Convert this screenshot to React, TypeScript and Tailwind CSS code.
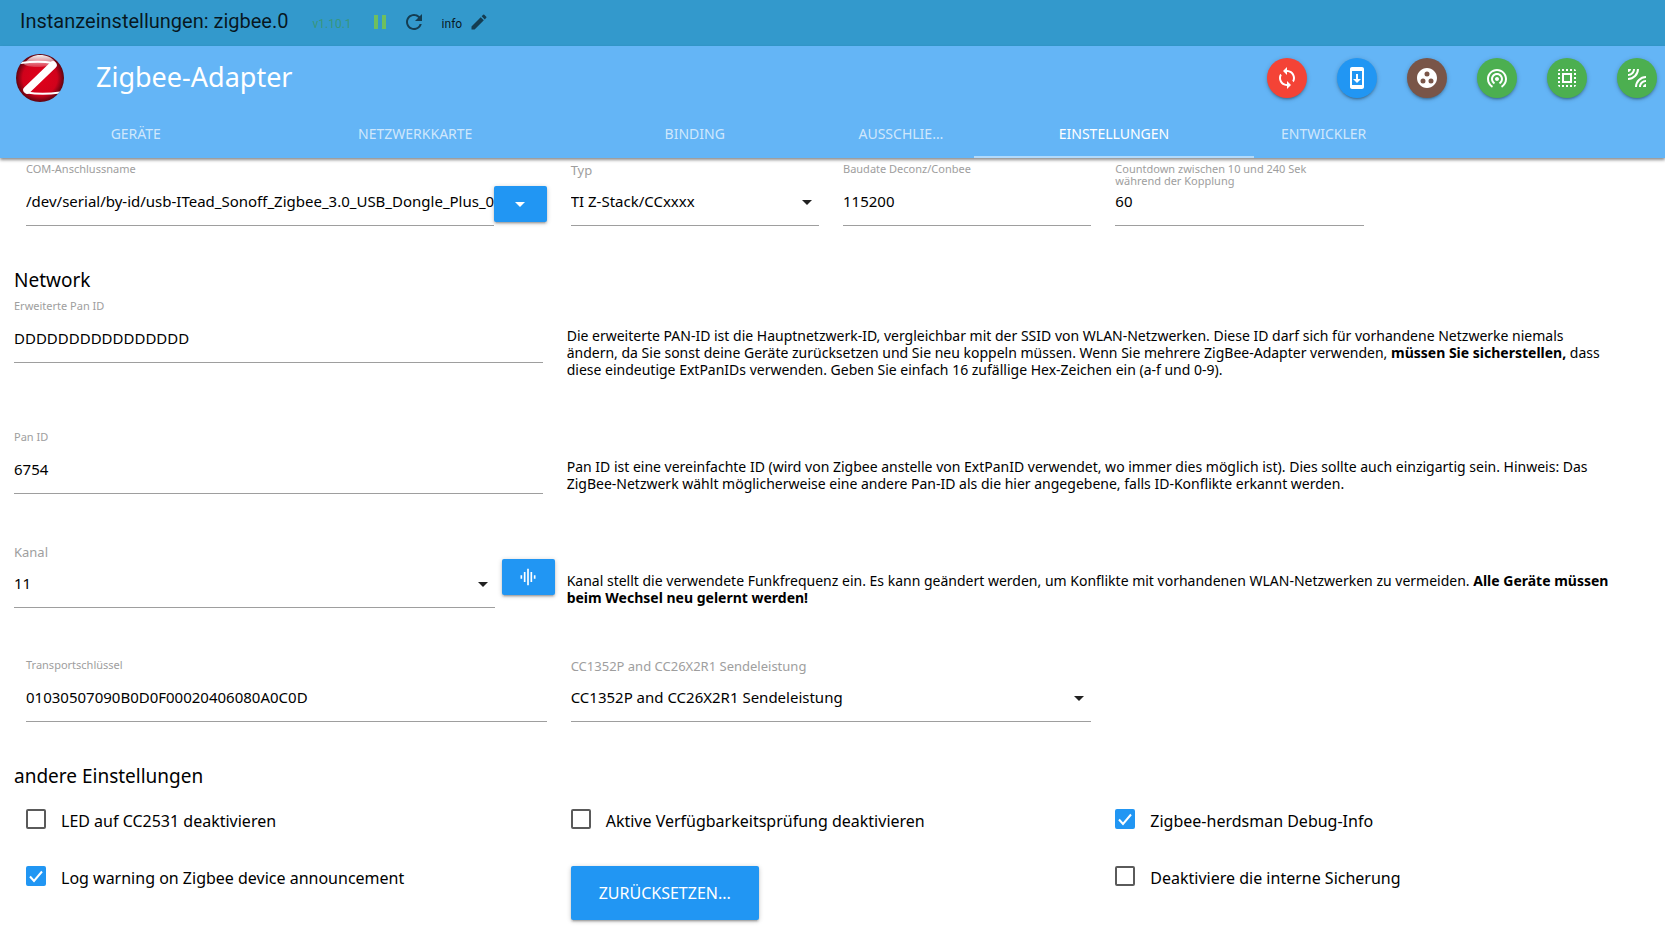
import { useId, type ReactNode } from "react";
import type { IconType } from "react-icons";
import {
  MdArrowDropDown,
  MdEdit,
  MdGraphicEq,
  MdGroupWork,
  MdLeakAdd,
  MdPause,
  MdRefresh,
  MdSelectAll,
  MdSync,
  MdSystemUpdate,
  MdWifiTethering,
} from "react-icons/md";

const shadow = "shadow-[0_2px_2px_0_rgba(0,0,0,0.14),0_3px_1px_-2px_rgba(0,0,0,0.12),0_1px_5px_0_rgba(0,0,0,0.2)]";

const actions: { label: string; icon: IconType; color: string }[] = [
  { label: "Aktualisieren", icon: MdSync, color: "bg-[#f44336]" },
  { label: "Firmware", icon: MdSystemUpdate, color: "bg-[#2196f3]" },
  { label: "Gruppen", icon: MdGroupWork, color: "bg-[#795548]" },
  { label: "Touchlink", icon: MdWifiTethering, color: "bg-[#4caf50]" },
  { label: "Auswahl", icon: MdSelectAll, color: "bg-[#4caf50]" },
  { label: "Anlernen", icon: MdLeakAdd, color: "bg-[#4caf50]" },
];

const tabs = [
  { label: "Geräte", span: "col-span-2" },
  { label: "Netzwerkkarte", span: "col-span-2" },
  { label: "Binding", span: "col-span-2" },
  { label: "Ausschließen", span: "col-span-1" },
  { label: "Einstellungen", span: "col-span-2", active: true },
  { label: "Entwickler", span: "col-span-1" },
];

function Logo() {
  return (
    <svg viewBox="0 0 48 48" className="size-12 shrink-0" aria-hidden="true">
      <defs>
        <radialGradient id="ball" cx="50%" cy="50%" r="50%">
          <stop offset="0" stopColor="#e2001a" />
          <stop offset="0.72" stopColor="#d0021b" />
          <stop offset="1" stopColor="#5e0410" />
        </radialGradient>
        <linearGradient id="gloss" x1="0" y1="0" x2="0" y2="1">
          <stop offset="0" stopColor="#fff" stopOpacity="0.95" />
          <stop offset="1" stopColor="#fff" stopOpacity="0.2" />
        </linearGradient>
        <clipPath id="disc">
          <circle cx="24" cy="24" r="24" />
        </clipPath>
      </defs>
      <circle cx="24" cy="24" r="24" fill="url(#ball)" />
      <path d="M8 10C13 3 18 1 24 1s12 2 16 8c-3 4-29 6-32 1z" fill="url(#gloss)" />
      <g clipPath="url(#disc)" fill="none" stroke="#fff" strokeLinecap="round" strokeLinejoin="round">
        <path d="M5 9C16 7.500 28 7.500 37 9" strokeWidth="2" />
        <path d="M37 11 11 36" strokeWidth="7.500" />
        <path d="M11 38.500C22 40.500 34 40 44 38.500" strokeWidth="2" />
      </g>
    </svg>
  );
}

const labelBase = "block h-6 text-[#9e9e9e]";
const controlBase = "h-[39px] w-full rounded-none border-b border-[#9e9e9e] bg-transparent pb-2.5 text-[15px] text-black outline-none";

function TextField({ label, value }: { label: string; value: string }) {
  const id = useId();
  return (
    <div className="min-w-0 flex-1">
      <label htmlFor={id} className={`${labelBase} max-w-[208px] text-[11px] leading-3`}>
        {label}
      </label>
      <input id={id} type="text" defaultValue={value} className={controlBase} />
    </div>
  );
}

function SelectField({ label, value }: { label: string; value: string }) {
  const id = useId();
  return (
    <div className="min-w-0 flex-1">
      <label htmlFor={id} className={`${labelBase} text-[13px] leading-[14px]`}>
        {label}
      </label>
      <div className="relative">
        <select id={id} className={`${controlBase} appearance-none pr-8`}>
          <option>{value}</option>
        </select>
        <MdArrowDropDown size={24} className="pointer-events-none absolute top-[3px] right-0 text-[#212121]" />
      </div>
    </div>
  );
}

function Checkbox({ label, checked = false }: { label: string; checked?: boolean }) {
  return (
    <label className="flex items-start gap-[15px] self-start">
      <span className="relative size-5 shrink-0">
        <input
          type="checkbox"
          defaultChecked={checked}
          className="peer block size-5 appearance-none rounded-xs border-2 border-[#5a5a5a] checked:border-[#2196f3] checked:bg-[#2196f3]"
        />
        <svg viewBox="0 0 20 20" className="pointer-events-none absolute inset-0 hidden size-5 peer-checked:block" aria-hidden="true">
          <path d="M4 10.500 8 15 16 5.500" fill="none" stroke="#fff" strokeWidth="2" />
        </svg>
      </span>
      <span className="text-[16px] leading-6">{label}</span>
    </label>
  );
}

function BlueButton({ label, children }: { label: string; children: ReactNode }) {
  return (
    <button type="button" aria-label={label} className={`flex h-9 w-[53px] shrink-0 items-center justify-center rounded-xs bg-[#2196f3] text-white ${shadow}`}>
      {children}
    </button>
  );
}

function Explained({ field, children }: { field: ReactNode; children: ReactNode }) {
  return (
    <div className="grid grid-cols-12">
      <div className="col-span-4 flex">{field}</div>
      <p className="col-span-8 mt-[27px] pr-8 pl-2 text-[14px] leading-[17px]">{children}</p>
    </div>
  );
}

export default function App() {
  return (
    <div className="min-h-screen overflow-x-hidden bg-white font-['Noto_Sans','Open_Sans',sans-serif] text-black">
      <div className="flex h-[46px] items-center bg-[#3399cc] pb-[3px] pl-5 font-['Roboto',sans-serif] text-black/85">
        <h1 className="mb-0.5 text-[20px]">Instanzeinstellungen: zigbee.0</h1>
        <span className="mt-1 ml-6 text-[12px] text-[#38977c]">v1.10.1</span>
        <button type="button" aria-label="Anhalten" className="ml-4 text-[#6fbf5f]">
          <MdPause size={24} />
        </button>
        <button type="button" aria-label="Neu laden" className="ml-[10px] text-black/60">
          <MdRefresh size={24} />
        </button>
        <span className="mt-1 ml-4 text-[12px]">info</span>
        <button type="button" aria-label="Bearbeiten" className="ml-[7px] text-black/60">
          <MdEdit size={20} />
        </button>
      </div>

      <header className="relative bg-[#64b5f6] text-white shadow-[0_2px_3px_rgba(0,0,0,0.45)]">
        <div className="flex items-start pt-2 pr-2 pl-4">
          <Logo />
          <h2 className="ml-8 text-[27px] leading-[46px]">Zigbee-Adapter</h2>
          <div className="mt-1 ml-auto flex gap-[30px]">
            {actions.map(({ label, icon: Icon, color }) => (
              <button key={label} type="button" aria-label={label} className={`flex size-10 items-center justify-center rounded-full ${color} ${shadow}`}>
                <Icon size={24} />
              </button>
            ))}
          </div>
        </div>
        <nav className="-mr-2 -ml-1 mt-2 grid grid-cols-12">
          {tabs.map(({ label, span, active }) => (
            <a
              key={label}
              href="#"
              className={`${span} h-12 truncate border-b-2 px-6 text-center text-[14px] leading-[48px] uppercase ${active ? "border-[#b1dafb] text-white" : "border-transparent text-white/70"}`}
            >
              {label}
            </a>
          ))}
        </nav>
      </header>

      <main className="pt-[5px] pr-[17px] pb-4 pl-[14px]">
        <div className="grid grid-cols-12">
          <div className="col-span-4 flex px-3">
            <TextField label="COM-Anschlussname" value="/dev/serial/by-id/usb-ITead_Sonoff_Zigbee_3.0_USB_Dongle_Plus_0001" />
            <div className="mt-[23px]">
              <BlueButton label="Anschluss wählen">
                <MdArrowDropDown size={24} />
              </BlueButton>
            </div>
          </div>
          <div className="col-span-2 px-3">
            <SelectField label="Typ" value="TI Z-Stack/CCxxxx" />
          </div>
          <div className="col-span-2 px-3">
            <TextField label="Baudate Deconz/Conbee" value="115200" />
          </div>
          <div className="col-span-2 px-3">
            <TextField label="Countdown zwischen 10 und 240 Sek während der Kopplung" value="60" />
          </div>
        </div>

        <h3 className="mt-10 mb-[6px] text-[19px] leading-7">Network</h3>
        <Explained
          field={
            <div className="flex flex-1 pr-4">
              <TextField label="Erweiterte Pan ID" value="DDDDDDDDDDDDDDDD" />
            </div>
          }
        >
          Die erweiterte PAN-ID ist die Hauptnetzwerk-ID, vergleichbar mit der SSID von WLAN-Netzwerken. Diese ID darf sich für vorhandene Netzwerke niemals ändern, da Sie sonst deine Geräte zurücksetzen und Sie neu koppeln müssen. Wenn Sie mehrere ZigBee-Adapter verwenden,{" "}
          <b>müssen Sie sicherstellen,</b> dass diese eindeutige ExtPanIDs verwenden. Geben Sie einfach 16 zufällige Hex-Zeichen ein (a-f und 0-9).
        </Explained>

        <div className="mt-[53px]">
          <Explained
            field={
              <div className="flex flex-1 pr-4">
                <TextField label="Pan ID" value="6754" />
              </div>
            }
          >
            Pan ID ist eine vereinfachte ID (wird von Zigbee anstelle von ExtPanID verwendet, wo immer dies möglich ist). Dies sollte auch einzigartig sein. Hinweis: Das ZigBee-Netzwerk wählt möglicherweise eine andere Pan-ID als die hier angegebene, falls ID-Konflikte erkannt werden.
          </Explained>
        </div>

        <div className="mt-[51px]">
          <Explained
            field={
              <div className="flex flex-1 gap-[7px] pr-1">
                <SelectField label="Kanal" value="11" />
                <div className="mt-[14px]">
                  <BlueButton label="Kanäle scannen">
                    <MdGraphicEq size={20} />
                  </BlueButton>
                </div>
              </div>
            }
          >
            Kanal stellt die verwendete Funkfrequenz ein. Es kann geändert werden, um Konflikte mit vorhandenen WLAN-Netzwerken zu vermeiden. <b>Alle Geräte müssen beim Wechsel neu gelernt werden!</b>
          </Explained>
        </div>

        <div className="mt-[51px] grid grid-cols-12">
          <div className="col-span-4 px-3">
            <TextField label="Transportschlüssel" value="01030507090B0D0F00020406080A0C0D" />
          </div>
          <div className="col-span-4 px-3">
            <SelectField label="CC1352P and CC26X2R1 Sendeleistung" value="CC1352P and CC26X2R1 Sendeleistung" />
          </div>
        </div>

        <h3 className="mt-10 mb-[19px] text-[19px] leading-7">andere Einstellungen</h3>
        <div className="grid grid-cols-3 gap-x-6 gap-y-[33px] px-3">
          <Checkbox label="LED auf CC2531 deaktivieren" />
          <Checkbox label="Aktive Verfügbarkeitsprüfung deaktivieren" />
          <Checkbox label="Zigbee-herdsman Debug-Info" checked />
          <Checkbox label="Log warning on Zigbee device announcement" checked />
          <div>
            <button type="button" className={`h-[54px] rounded-xs bg-[#2196f3] px-7 text-[16px] text-white uppercase ${shadow}`}>
              Zurücksetzen...
            </button>
          </div>
          <Checkbox label="Deaktiviere die interne Sicherung" />
        </div>
      </main>
    </div>
  );
}
